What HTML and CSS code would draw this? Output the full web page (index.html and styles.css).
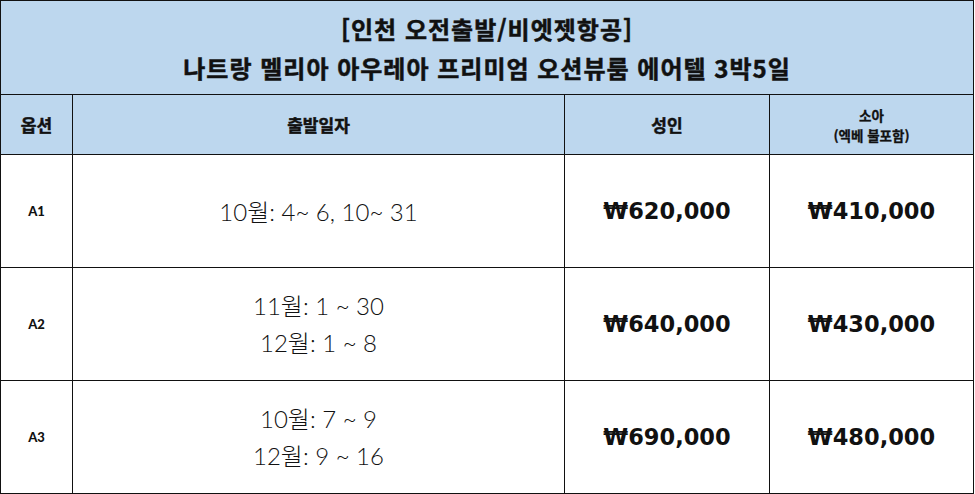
FILE: index.html
```html
<!DOCTYPE html>
<html lang="ko">
<head>
<meta charset="utf-8">
<title>나트랑 멜리아 아우레아</title>
<link rel="stylesheet" href="styles.css">
</head>
<body>
<table class="price-table">
  <colgroup>
    <col class="c-opt">
    <col class="c-date">
    <col class="c-adult">
    <col class="c-child">
  </colgroup>
  <thead>
    <tr class="title-row">
      <th colspan="4" class="title">[인천 오전출발/비엣젯항공]<br>나트랑 멜리아 아우레아 프리미엄 오션뷰룸 에어텔 3박5일</th>
    </tr>
    <tr class="head-row">
      <th>옵션</th>
      <th>출발일자</th>
      <th>성인</th>
      <th class="small">소아<br>(엑베 불포함)</th>
    </tr>
  </thead>
  <tbody>
    <tr>
      <td class="opt">A1</td>
      <td class="date">10월: 4~ 6, 10~ 31</td>
      <td class="price">₩620,000</td>
      <td class="price">₩410,000</td>
    </tr>
    <tr>
      <td class="opt">A2</td>
      <td class="date">11월: 1 ~ 30<br>12월: 1 ~ 8</td>
      <td class="price">₩640,000</td>
      <td class="price">₩430,000</td>
    </tr>
    <tr>
      <td class="opt">A3</td>
      <td class="date">10월: 7 ~ 9<br>12월: 9 ~ 16</td>
      <td class="price">₩690,000</td>
      <td class="price">₩480,000</td>
    </tr>
  </tbody>
</table>
</body>
</html>
```
FILE: styles.css
```css
html, body {
  margin: 0;
  padding: 0;
  background: #ffffff;
}
.price-table {
  border-collapse: collapse;
  width: 973px;
  height: 493px;
  table-layout: fixed;
  font-family: "Noto Sans CJK KR", "Noto Sans", sans-serif;
  color: #111;
}
.c-opt { width: 72px; }
.c-date { width: 492px; }
.c-adult { width: 205px; }
.c-child { width: 204px; }
.price-table th,
.price-table td {
  border: 1.5px solid #111;
  text-align: center;
  vertical-align: middle;
  padding: 0;
}
.title-row { height: 94px; }
.head-row { height: 60px; }
.price-table tbody tr { height: 113px; }
thead th {
  background: #bdd7ee;
  font-weight: 700;
  -webkit-text-stroke: 0.5px #111;
}
.title {
  font-size: 24px;
  letter-spacing: 1px;
  line-height: 39px;
  padding-bottom: 2px;
}
.head-row th {
  font-size: 17px;
}
.head-row th.small {
  font-size: 13.5px;
  line-height: 20px;
  -webkit-text-stroke: 0.3px #111;
}
.opt {
  font-family: "Lato", "Noto Sans CJK KR", sans-serif;
  font-size: 13px;
  font-weight: 900;
}
.date {
  font-family: "Lato", "Noto Sans CJK KR", sans-serif;
  font-weight: 300;
  font-size: 24px;
  line-height: 37px;
}
.price {
  font-family: "DejaVu Sans", "Noto Sans CJK KR", sans-serif;
  font-weight: 700;
  font-size: 22.5px;
}
```
